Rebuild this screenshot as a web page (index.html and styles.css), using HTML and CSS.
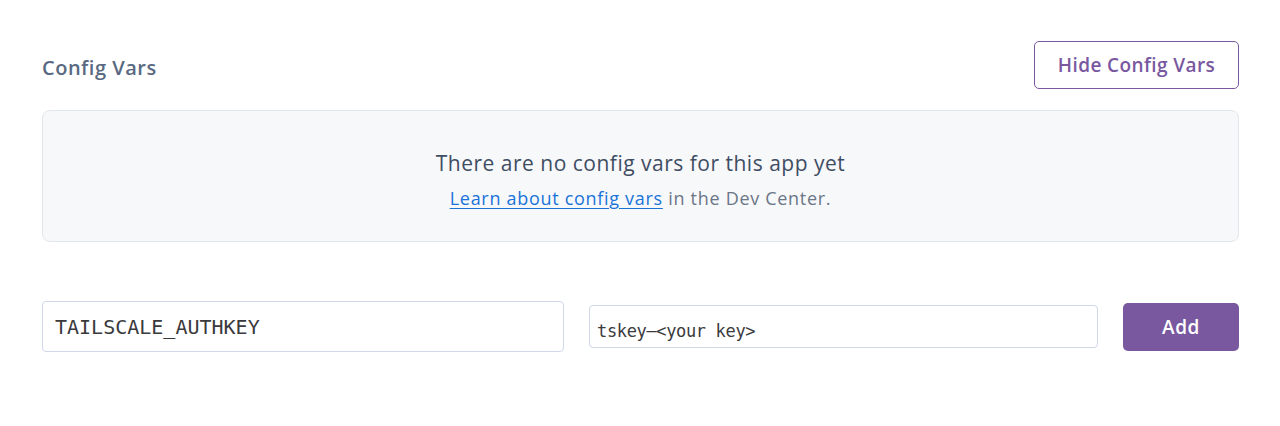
FILE: index.html
```html
<!DOCTYPE html>
<html lang="en">
<head>
<meta charset="utf-8">
<title>Config Vars</title>
<link rel="stylesheet" href="styles.css">
</head>
<body>
<div class="section">
  <div class="header">
    <h2 class="title">Config Vars</h2>
    <button class="btn-outline">Hide Config Vars</button>
  </div>
  <div class="empty">
    <p class="empty-title">There are no config vars for this app yet</p>
    <p class="empty-sub"><a href="#" class="link">Learn about config vars</a> in the Dev Center.</p>
  </div>
  <form class="row">
    <input class="field field-key" type="text" value="TAILSCALE_AUTHKEY">
    <input class="field field-value" type="text" value="tskey–&lt;your key&gt;">
    <button type="button" class="btn-primary">Add</button>
  </form>
</div>
</body>
</html>
```

FILE: styles.css
```css
html, body {
  margin: 0;
  padding: 0;
  background: #ffffff;
}
body {
  font-family: "Open Sans", "Lato", sans-serif;
  color: #3f4d63;
}
.section {
  padding: 41px 41px 0 42px;
}
.header {
  display: flex;
  justify-content: space-between;
  align-items: center;
}
.title {
  margin: 0;
  font-size: 20px;
  letter-spacing: 0.5px;
  font-weight: 600;
  color: #596981;
  position: relative;
  top: 2px;
}
.btn-outline {
  height: 48px;
  width: 205px;
  border: 1px solid #79589f;
  border-radius: 5px;
  background: #fff;
  color: #79589f;
  font-family: inherit;
  font-size: 19px;
  letter-spacing: 0.4px;
  font-weight: 600;
  padding: 0;
}
.empty {
  margin-top: 21px;
  height: 132px;
  box-sizing: border-box;
  border: 1px solid #e3e6ea;
  border-radius: 8px;
  background: #f7f8fa;
  display: flex;
  flex-direction: column;
  align-items: center;
  padding-top: 37px;
}
.empty-title {
  margin: 0;
  font-size: 21px;
  letter-spacing: 0.5px;
  line-height: 30px;
  color: #3f4d63;
}
.empty-sub {
  margin: 7px 0 0;
  font-size: 18px;
  letter-spacing: 0.7px;
  line-height: 26px;
  color: #6b7688;
}
.link {
  color: #1a73d9;
  text-decoration: underline;
  text-underline-offset: 3px;
}
.row {
  margin: 59px 0 0;
  display: flex;
  align-items: center;
  gap: 25px;
}
.field {
  box-sizing: border-box;
  border: 1px solid #cfd8e8;
  border-radius: 4px;
  background: #fff;
  font-family: "DejaVu Sans Mono", monospace;
  color: #3a3a3c;
  outline: none;
}
.field-key {
  width: 522px;
  height: 51px;
  font-size: 20px;
  padding: 0 12px;
}
.field-value {
  width: 509px;
  height: 43px;
  font-size: 17px;
  letter-spacing: -0.35px;
  padding: 9px 7px 0;
}
.btn-primary {
  width: 116px;
  height: 48px;
  border: none;
  border-radius: 5px;
  background: #79589f;
  color: #fff;
  font-family: inherit;
  font-size: 19px;
  letter-spacing: 0.6px;
  font-weight: 600;
  padding: 0;
}
```
